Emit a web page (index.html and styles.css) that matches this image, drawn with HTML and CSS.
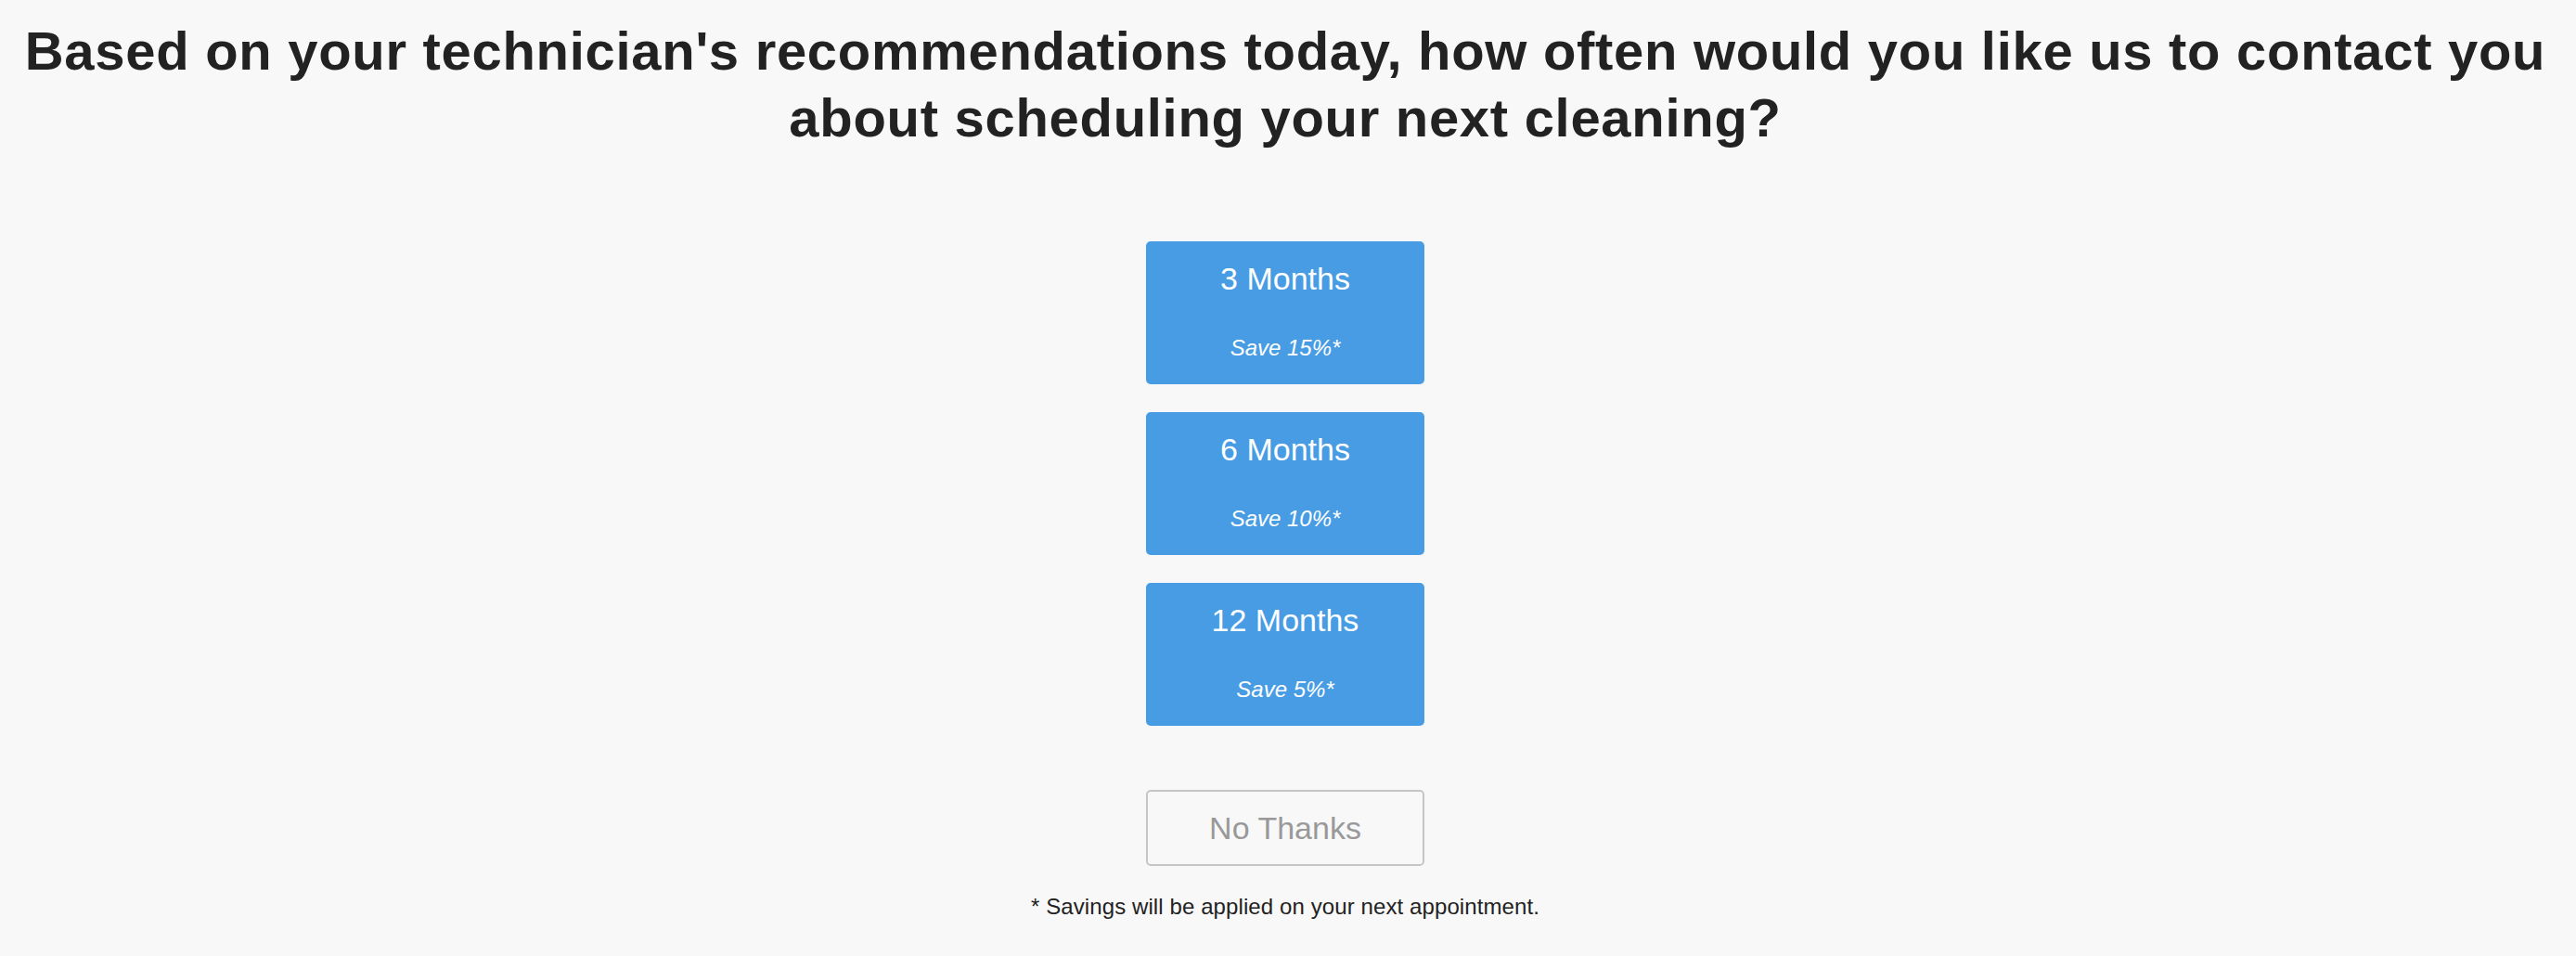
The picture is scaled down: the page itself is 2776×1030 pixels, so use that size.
FILE: index.html
```html
<!DOCTYPE html>
<html>
<head lang="en">
    <meta charset="UTF-8">
    <title>Next cleaning</title>
    <link rel="stylesheet" href="styles.css">
</head>
<body>
<div id="wrap">
    <h1 class="question">Based on your technician's recommendations today, how often would you like us to contact you about scheduling your next cleaning?</h1>

    <div class="options">
        <button class="plan">
            <span class="months">3 Months</span>
            <span class="save">Save 15%*</span>
        </button>
        <button class="plan">
            <span class="months">6 Months</span>
            <span class="save">Save 10%*</span>
        </button>
        <button class="plan">
            <span class="months">12 Months</span>
            <span class="save">Save 5%*</span>
        </button>

        <button class="no_thanks">No Thanks</button>
    </div>

    <p class="note">* Savings will be applied on your next appointment.</p>
</div>
</body>
</html>
```

FILE: styles.css
```css
*{
    padding: 0;
    margin: 0;
    box-sizing: border-box;
}
body{
    background: #f8f8f8;
    color: #222222;
    font-family: "Liberation Sans", Arial, sans-serif;
    padding-right: 6px;
}

#wrap{
    display: flex;
    flex-direction: column;
    align-items: center;
}

.question{
    margin-top: 19px;
    text-align: center;
    font-size: 58px;
    line-height: 72px;
    font-weight: bold;
    letter-spacing: 0.7px;
    color: #222222;
    max-width: 2760px;
}

.options{
    margin-top: 97px;
    display: flex;
    flex-direction: column;
    align-items: center;
    gap: 30px;
}

.plan{
    width: 300px;
    height: 154px;
    padding-top: 20px;
    display: flex;
    flex-direction: column;
    align-items: center;
    gap: 41px;
    background: #479ce4;
    border: none;
    border-radius: 5px;
    color: #ffffff;
    font-family: inherit;
}
.plan .months{
    font-size: 34px;
    line-height: 40px;
}
.plan .save{
    font-size: 24px;
    line-height: 28px;
    font-style: italic;
}

.no_thanks{
    margin-top: 39px;
    width: 300px;
    height: 82px;
    background: transparent;
    border: 2px solid #c6c6c6;
    border-radius: 5px;
    color: #999999;
    font-family: inherit;
    font-size: 34px;
    line-height: 40px;
}

.note{
    margin-top: 30px;
    font-size: 24px;
    line-height: 28px;
    letter-spacing: 0.1px;
    color: #222222;
}
```
